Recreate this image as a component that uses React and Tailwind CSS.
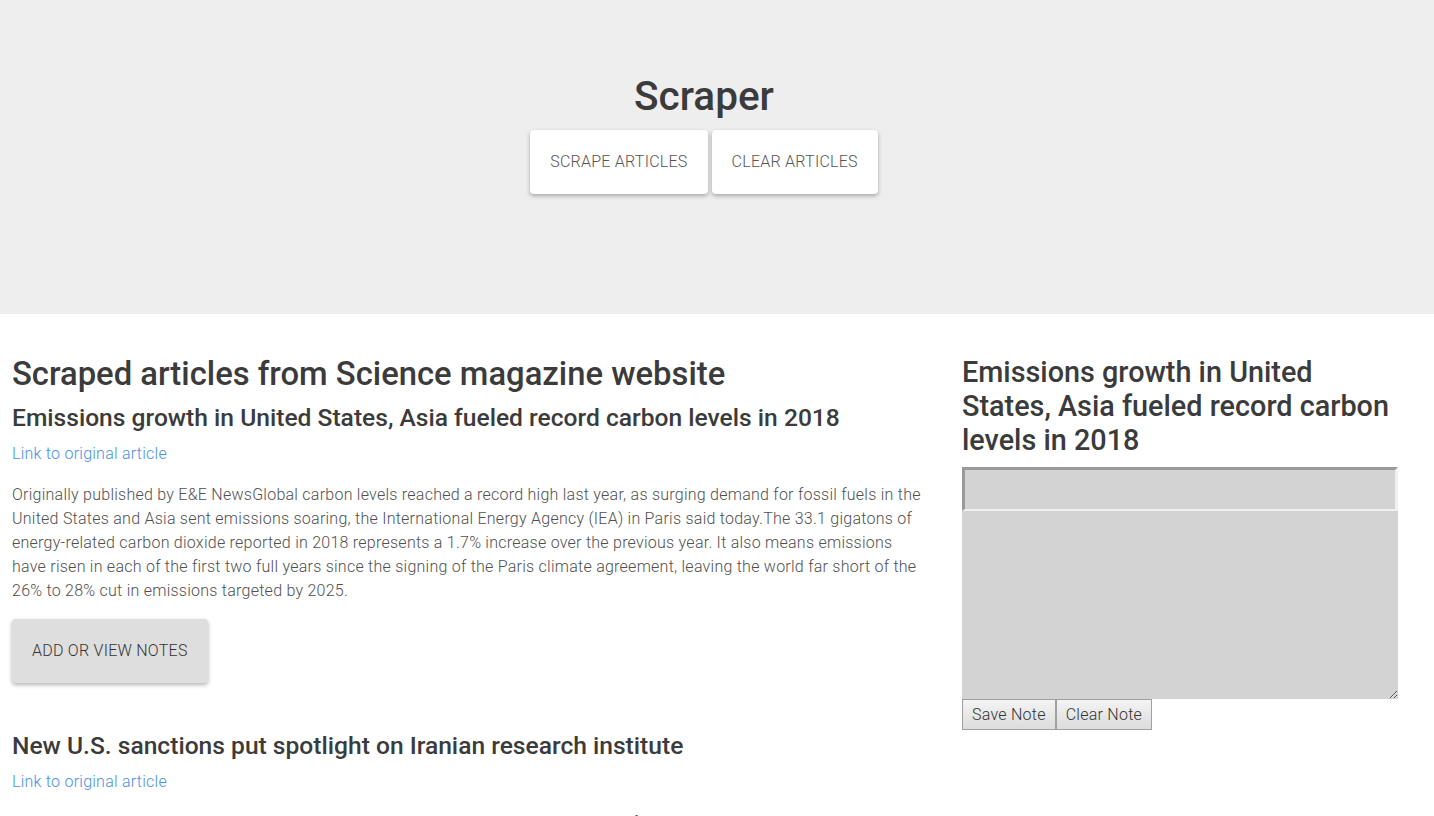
const ARTICLES = [
  {
    title: 'Emissions growth in United States, Asia fueled record carbon levels in 2018',
    summary:
      'Originally published by E&E NewsGlobal carbon levels reached a record high last year, as surging demand for fossil fuels in the United States and Asia sent emissions soaring, the International Energy Agency (IEA) in Paris said today.The 33.1 gigatons of energy-related carbon dioxide reported in 2018 represents a 1.7% increase over the previous year. It also means emissions have risen in each of the first two full years since the signing of the Paris climate agreement, leaving the world far short of the 26% to 28% cut in emissions targeted by 2025.',
  },
  {
    title: 'New U.S. sanctions put spotlight on Iranian research institute',
    summary:
      'When the United States and allies reached a deal to ease Iran\u2019s sanctions in exchange for curbs on its nuclear program in 2015, the intelligence community and scientists had expected that research would continue to be monitored closely.',
  },
];

function HeroButton({ children }) {
  return (
    <button
      type="button"
      className="h-16 rounded-[4px] bg-white px-5 text-base font-light uppercase tracking-[0.25px] text-[#555] shadow-[0_2px_4px_rgba(0,0,0,0.3)]"
    >
      {children}
    </button>
  );
}

function Article({ article }) {
  return (
    <div className="mb-[47px]">
      <h3 className="mt-[6px] text-[24.6px] font-medium leading-[32px] text-[#3b3b3b]">{article.title}</h3>
      <a href="#" className="mt-[8px] block text-base font-light leading-[24px] tracking-[0.25px] text-[#4a90e2]">
        Link to original article
      </a>
      <p className="mt-[17px] text-base font-light leading-[24px] tracking-[0.25px] text-[#505050]">
        {article.summary}
      </p>
      <button
        type="button"
        className="mt-[16px] h-16 rounded-[4px] bg-[#dedede] px-5 text-base font-light uppercase tracking-[0.25px] text-[#333] shadow-[0_2px_4px_rgba(0,0,0,0.3)]"
      >
        Add or view notes
      </button>
    </div>
  );
}

function NoteButton({ children }) {
  return (
    <button
      type="button"
      className="h-[31px] border border-[#a0a0a0] bg-gradient-to-b from-[#f4f4f4] to-[#dcdcdc] px-[9px] text-base font-light tracking-[0.25px] text-[#333]"
    >
      {children}
    </button>
  );
}

export default function App() {
  return (
    <div className="min-h-[816px] bg-white font-['Roboto',sans-serif]">
      <header className="flex h-[314px] flex-col items-center bg-[#eeeeee] pr-[26px] pt-[72px]">
        <h1 className="text-[40.5px] font-medium leading-[48px] text-[#3b3b3b]">Scraper</h1>
        <div className="mt-[10px] flex gap-1">
          <HeroButton>Scrape articles</HeroButton>
          <HeroButton>Clear articles</HeroButton>
        </div>
      </header>

      <main className="flex pt-[38px]">
        <section className="w-[934px] shrink-0 px-3">
          <h2 className="text-[32.8px] font-medium leading-[44px] text-[#3b3b3b]">
            Scraped articles from Science magazine website
          </h2>
          {ARTICLES.map((article) => (
            <Article key={article.title} article={article} />
          ))}
        </section>

        <aside className="ml-[28px] w-[436px]">
          <h3 className="mt-[3px] text-[28.8px] font-medium leading-[34px] text-[#3b3b3b]">
            Emissions growth in United States, Asia fueled record carbon levels in 2018
          </h3>
          <div className="mt-[10px] flex flex-col">
            <input
              type="text"
              className="h-[44px] w-full border-[3px] border-b-[2px] border-[#9a9a9a] border-b-[#f0f0f0] border-r-[#f0f0f0] bg-[#d3d3d3] outline-none"
            />
            <textarea className="h-[188px] w-full resize-y bg-[#d3d3d3] outline-none" />
            <div className="flex">
              <NoteButton>Save Note</NoteButton>
              <NoteButton>Clear Note</NoteButton>
            </div>
          </div>
        </aside>
      </main>
    </div>
  );
}
